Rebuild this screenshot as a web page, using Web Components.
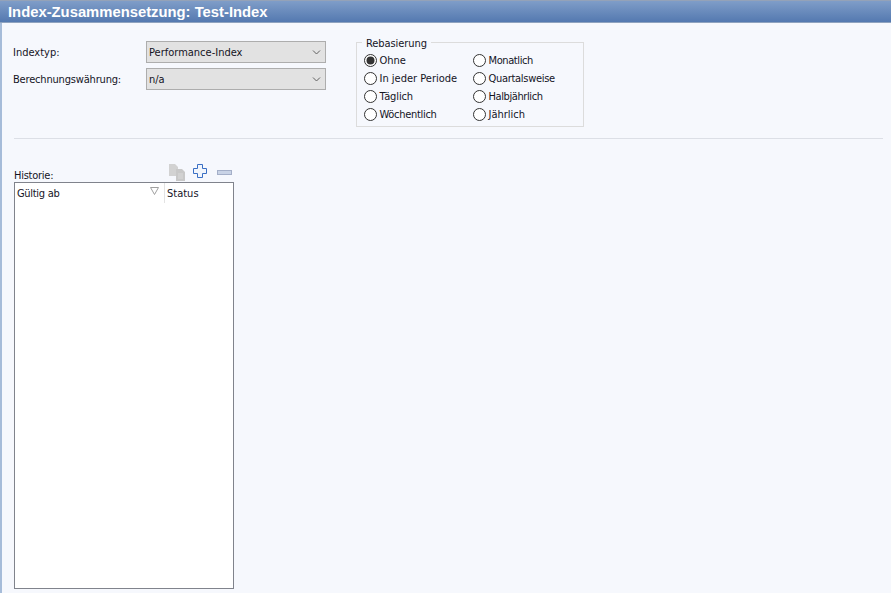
<!DOCTYPE html>
<html>
<head>
<meta charset="utf-8">
<style>
  html, body { margin: 0; height: 100%; overflow: hidden; }
  body { font: 11px "DejaVu Sans Condensed", "DejaVu Sans", sans-serif; color: #14141f; background: #f6f8fd; }
  .tight { letter-spacing: -.18px; }
</style>
</head>
<body>
<index-panel heading="Index-Zusammensetzung: Test-Index">
  <form-row label="Indextyp:" value="Performance-Index"></form-row>
  <form-row label="Berechnungswährung:" value="n/a" class="tight"></form-row>
</index-panel>

<script>
class ComboBox extends HTMLElement {
  constructor() {
    super();
    this.attachShadow({ mode: 'open' });
    const value = this.getAttribute('value') || '';
    this.shadowRoot.innerHTML = `
      <style>
        :host { display: flex; align-items: center; justify-content: space-between; box-sizing: border-box;
                width: 180px; height: 22px; padding: 0 4px 0 2px; background: #e2e2e2; border: 1px solid #adadad; letter-spacing: 0; }
        svg { display: block; }
      </style>
      <span>${value}</span>
      <svg width="9" height="5" viewBox="0 0 9 5"><path d="M1 .5l3.500 3.500 3.500-3.500" fill="none" stroke="#606060" stroke-width="1"/></svg>
    `;
  }
}

class FormRow extends HTMLElement {
  constructor() {
    super();
    this.attachShadow({ mode: 'open' });
    const label = this.getAttribute('label') || '';
    const value = this.getAttribute('value') || '';
    this.shadowRoot.innerHTML = `
      <style>
        :host { display: flex; align-items: center; }
        span { width: 133px; }
      </style>
      <span>${label}</span>
      <combo-box value="${value}"></combo-box>
    `;
  }
}

class RadioOption extends HTMLElement {
  constructor() {
    super();
    this.attachShadow({ mode: 'open' });
    const checked = this.hasAttribute('checked');
    this.shadowRoot.innerHTML = `
      <style>
        :host { display: flex; align-items: center; gap: 2.5px; height: 18px; }
        svg { display: block; }
      </style>
      <svg width="13" height="13" viewBox="0 0 13 13">
        <circle cx="6.5" cy="6.5" r="6" fill="#fff" stroke="#333"/>
        ${checked ? '<circle cx="6.5" cy="6.5" r="4" fill="#333"/>' : ''}
      </svg>
      <span><slot></slot></span>
    `;
  }
}

class RadioGroup extends HTMLElement {
  constructor() {
    super();
    this.attachShadow({ mode: 'open' });
    const legend = this.getAttribute('legend') || '';
    this.shadowRoot.innerHTML = `
      <style>
        :host { display: block; position: relative; box-sizing: border-box; width: 228px; height: 85px; margin-top: 1px;
                border: 1px solid #dcdcdc; padding: 8px 0 0 7px; }
        .legend { position: absolute; top: -6px; left: 5px; padding: 0 4px; background: #f6f8fd; line-height: 13px; letter-spacing: -.08px; }
        .grid { display: grid; grid-template-columns: 109px auto; grid-auto-flow: column; grid-template-rows: repeat(4, 18px); }
      </style>
      <div class="legend">${legend}</div>
      <div class="grid"><slot></slot></div>
    `;
  }
}

class HistoryToolbar extends HTMLElement {
  constructor() {
    super();
    this.attachShadow({ mode: 'open' });
    this.shadowRoot.innerHTML = `
      <style>
        :host { display: flex; align-items: flex-end; height: 19px; margin-left: -1px; }
        svg { display: block; }
      </style>
      <svg width="18" height="18" viewBox="0 0 18 18" style="margin-bottom:1px">
        <path d="M1 1h6l3 3v9H1z" fill="#d2d2d2"/>
        <path d="M8 6h6l3 3v9H8z" fill="#c8c8c8"/>
        <path d="M10 11h5M10 13h5M10 15h5" stroke="#dadada" fill="none"/>
      </svg>
      <svg width="14" height="14" viewBox="0 0 14 14" style="margin:0 0 4px 7px">
        <path d="M4.500 .5h5v4h4v5h-4v4h-5v-4h-4v-5h4z" fill="#f2f6fc" stroke="#3a6fc4"/>
      </svg>
      <svg width="15" height="5" viewBox="0 0 15 5" style="margin:0 0 7px 10px">
        <rect x=".5" y=".5" width="14" height="4" fill="#c9d3e6" stroke="#a4afc8"/>
      </svg>
    `;
  }
}

class HistoryTable extends HTMLElement {
  constructor() {
    super();
    this.attachShadow({ mode: 'open' });
    this.shadowRoot.innerHTML = `
      <style>
        :host { display: block; box-sizing: border-box; width: 220px; height: 407px; background: #fff; border: 1px solid #80838c; }
        .head { display: grid; grid-template-columns: 149px 1fr; height: 20px; }
        .cell { display: flex; align-items: center; justify-content: space-between; padding: 0 3px 0 2px; }
        .cell + .cell { border-left: 1px solid #e3e3e3; padding-left: 2px; }
        .name { letter-spacing: -.3px; }
        svg { display: block; margin: -4px 2px 0 0; }
      </style>
      <div class="head">
        <div class="cell"><span class="name">Gültig ab</span>
          <svg width="9" height="8" viewBox="0 0 9 8"><path d="M.5 .5h8l-4 7z" fill="none" stroke="#a0a0a0"/></svg>
        </div>
        <div class="cell">Status</div>
      </div>
    `;
  }
}

class IndexPanel extends HTMLElement {
  constructor() {
    super();
    this.attachShadow({ mode: 'open' });
    const heading = this.getAttribute('heading') || '';
    this.shadowRoot.innerHTML = `
      <style>
        :host { display: flex; flex-direction: column; height: 593px; box-sizing: border-box; }
        .title { height: 23px; box-sizing: border-box; padding: 0 0 0 8px; display: flex; align-items: center; flex: none;
                 background: linear-gradient(#7f9dc8, #5479b0); border-top: 1px solid #94a2b8; border-bottom: 1px solid #8fa3bf;
                 font: bold 14.8px "Liberation Sans", sans-serif; color: #fff; }
        .body { flex: 1; border-left: 2px solid #a6bcd9; }
        .top { display: flex; height: 116px; box-sizing: border-box; margin: 0 8px 0 12px; padding: 18px 0 0 0; border-bottom: 1px solid #dcdfe6; }
        .fields { display: flex; flex-direction: column; gap: 5px; width: 343px; margin-left: -1px; }
        .history { padding: 23px 0 0 12px; }
        .history-head { display: flex; align-items: flex-end; height: 20px; }
        .history-head span { width: 155px; line-height: 13px; letter-spacing: -.25px; }
        .s1 { letter-spacing: -.12px; }
        .s2 { letter-spacing: -.3px; }
        .s3 { letter-spacing: -.4px; }
      </style>
      <div class="title">${heading}</div>
      <div class="body">
        <div class="top">
          <div class="fields"><slot></slot></div>
          <radio-group legend="Rebasierung">
            <radio-option checked>Ohne</radio-option>
            <radio-option>In jeder Periode</radio-option>
            <radio-option class="s1">Täglich</radio-option>
            <radio-option class="s2">Wöchentlich</radio-option>
            <radio-option class="s3">Monatlich</radio-option>
            <radio-option class="s2">Quartalsweise</radio-option>
            <radio-option class="s3">Halbjährlich</radio-option>
            <radio-option>Jährlich</radio-option>
          </radio-group>
        </div>
        <div class="history">
          <div class="history-head"><span>Historie:</span><history-toolbar></history-toolbar></div>
          <history-table></history-table>
        </div>
      </div>
    `;
  }
}

customElements.define('combo-box', ComboBox);
customElements.define('form-row', FormRow);
customElements.define('radio-option', RadioOption);
customElements.define('radio-group', RadioGroup);
customElements.define('history-toolbar', HistoryToolbar);
customElements.define('history-table', HistoryTable);
customElements.define('index-panel', IndexPanel);
</script>
</body>
</html>
